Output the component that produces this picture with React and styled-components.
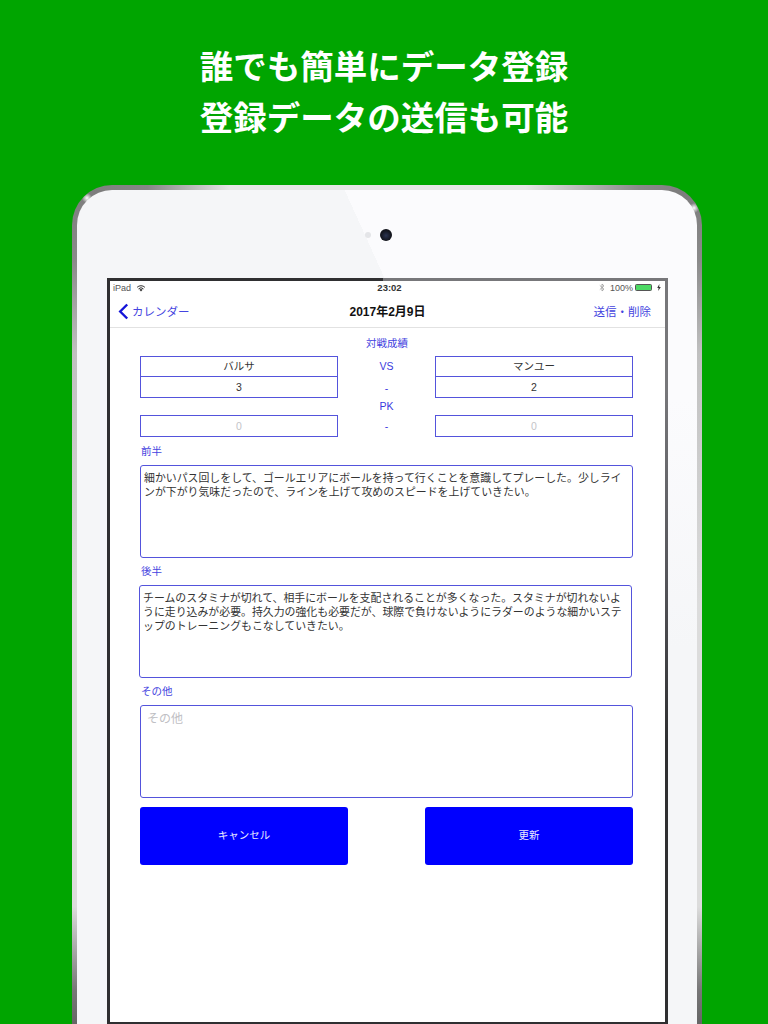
import React from "react";
import styled, { createGlobalStyle } from "styled-components";

const Global = createGlobalStyle`
  html, body { margin: 0; padding: 0; width: 768px; height: 1024px; overflow: hidden; background: #00a500; }
  body { font-family: "Liberation Sans", "Noto Sans CJK JP", sans-serif; }
`;
const Page = styled.div`
  width: 768px; height: 1024px; overflow: hidden; background: #00a500;
  display: flex; flex-direction: column; align-items: center;
`;
const Headline = styled.h1`
  margin: 0; padding-top: 41px; height: 185px; flex: none; box-sizing: border-box;
  font: 700 33.5px/51px "Noto Sans CJK JP", sans-serif; color: #fff; text-align: center;
`;
const Line = styled.div`white-space: nowrap; margin-top: -2px; margin-bottom: 2px;`;
const Chrome = styled.div`
  width: 630px; height: 839px; flex: none; box-sizing: border-box; padding: 5px 5px 0; margin-left: 6px;
  border-radius: 40px 40px 0 0;
  background:
    radial-gradient(circle 5px at 15px 13px, #ffffff, rgba(255,255,255,0)),
    radial-gradient(circle 5px at 622px 23px, #ffffff, rgba(255,255,255,0)),
    linear-gradient(90deg, #7e7e7e 0, #868686 12%, #e6e6e6 25%, #e6e6e6 72%, #8a8a8a 90%, #7a7a7a 100%) top / 100% 5px no-repeat,
    linear-gradient(180deg, #7c7c7c 0, #8a8a8a 9%, #c0c0c0 20%, #dcdcdc 50%, #dcdcdc 86%, #777 96%, #666 100%);
`;
const Bezel = styled.div`
  height: 100%; box-sizing: border-box; padding-top: 39px;
  border-radius: 35px 35px 0 0; display: flex; flex-direction: column; align-items: center;
  background:
    linear-gradient(180deg, rgba(245,246,248,0) 25%, #f5f6f8 55%),
    linear-gradient(65.6deg, #f5f6f8 64.7%, #fbfbfd 64.7%);
`;
const Sensors = styled.div`
  display: flex; align-items: center; gap: 9px; height: 12px; margin-bottom: 37px; margin-left: -17px;
`;
const Dot = styled.span`
  width: 6px; height: 6px; border-radius: 50%; background: #e4e5e8;
`;
const Lens = styled.span`
  width: 12px; height: 12px; border-radius: 50%;
  background: radial-gradient(circle at 50% 55%, #2a3350 0, #14161f 55%, #0c0c10 100%);
`;
const Screen = styled.div`
  width: 561px; flex: 1; box-sizing: border-box; border: 3px solid transparent; border-bottom-width: 2px;
  display: flex; flex-direction: column; margin-left: 1px;
  background:
    linear-gradient(#fff, #fff) padding-box,
    linear-gradient(90deg, #2f2f31 49.2%, #77777a 49.2%) top / 100% 3px no-repeat border-box,
    linear-gradient(180deg, #77777a 15%, #55555a 40%, #2f2f31 62%) right / 3px 100% no-repeat border-box,
    #2f2f31 border-box;
`;
const Status = styled.div`
  height: 16px; padding: 0 4px 3px 3px; display: grid; grid-template-columns: 1fr auto 1fr; align-items: center;
  font-size: 9px; color: #555; flex: none; box-sizing: border-box;
`;
const StatusSide = styled.div`
  display: flex; align-items: center; gap: 5px; justify-content: ${p => (p.$end ? "flex-end" : "flex-start")};
`;
const Clock = styled.div`font-weight: 700; font-size: 9.5px; color: #333; margin-left: 5px;`;
const Battery = styled.span`
  display: inline-block; width: 17px; height: 7px; border-radius: 1.5px; background: #4cd964; border: 0.5px solid #555; box-sizing: border-box;
`;
const Percent = styled.span`margin-right: -3px;`;
const Nav = styled.div`
  height: 31px; flex: none; box-sizing: border-box; border-bottom: 1px solid #e2e2e2; padding: 0 14px 2px 8px;
  display: grid; grid-template-columns: 1fr auto 1fr; align-items: center;
`;
const Back = styled.div`
  display: flex; align-items: center; gap: 3px; color: #4444e0; font-size: 11.5px;
  font-family: "Noto Sans CJK JP", sans-serif;
`;
const Title = styled.div`
  font: 700 12px "Liberation Sans", "Noto Sans CJK JP", sans-serif; color: #111; margin-left: 6px; padding-bottom: 1px;
`;
const Action = styled.div`
  text-align: right; color: #4444e0; font: 11.5px "Noto Sans CJK JP", sans-serif;
`;
const Form = styled.div`
  padding: 0 32px 0 30px; display: flex; flex-direction: column;
  font-family: "Noto Sans CJK JP", sans-serif;
`;
const Heading = styled.div`
  height: 28px; display: flex; align-items: center; justify-content: center;
  color: #4444e0; font-size: 10.5px; padding-top: 1px; box-sizing: border-box; margin-left: 1px;
`;
const Scores = styled.div`
  display: grid; grid-template-columns: 198px 97px 198px;
  grid-template-rows: 21px 21px 17px 22px; margin-bottom: 1px;
`;
const Cell = styled.div`
  border: 1px solid #5454dc; box-sizing: border-box; display: flex; align-items: center; justify-content: center;
  font-size: 10.5px; color: ${p => (p.$muted ? "#c4c4c8" : "#333")};
  margin-top: ${p => (p.$joined ? "-1px" : "0")};
  height: ${p => (p.$joined ? "22px" : "auto")};
  padding-bottom: ${p => (p.$raised ? "2px" : "0")};
  font-family: "Liberation Sans", "Noto Sans CJK JP", sans-serif;
`;
const Mid = styled.div`
  display: flex; align-items: center; justify-content: center; color: #3a3ade; font-size: 10.5px;
  padding-bottom: ${p => (p.$raised ? "2px" : "0")};
  font-family: "Liberation Sans", sans-serif;
`;
const Spacer = styled.div``;
const FieldLabel = styled.div`
  height: 27px; display: flex; align-items: center; color: #4444e0; font-size: 10.5px; box-sizing: border-box;
  padding: 0 0 2px 1px;
`;
const Area = styled.div`
  height: 93px; box-sizing: border-box; border: 1px solid #5454dc; border-radius: 3px;
  padding: 4px 3px; font-size: 10.9px; line-height: 14px; color: ${p => (p.$placeholder ? "#c0c0c4" : "#333")};
  margin-left: ${p => (p.$shifted ? "-1px" : "0")};
  margin-right: ${p => (p.$shifted ? "1px" : "0")};
  ${p => p.$placeholder && "padding: 5px 6px; font-size: 12px;"}
`;
const Gap = styled.div`height: 9px;`;
const Buttons = styled.div`display: flex; justify-content: space-between;`;
const Button = styled.div`
  width: 208px; height: 58px; box-sizing: border-box; padding-bottom: 4px; border-radius: 3px; background: #0000ff; color: #e8e8ff;
  display: flex; align-items: center; justify-content: center; font-size: 10.5px;
`;

const Wifi = () => (
  <svg width="10" height="8" viewBox="0 0 10 8" aria-hidden="true">
    <path d="M5 7.6 3.4 5.8a2.3 2.3 0 0 1 3.2 0z" fill="#333" />
    <path d="M2.5 4.9a3.6 3.6 0 0 1 5 0M1.1 3.3a5.6 5.6 0 0 1 7.8 0" stroke="#333" strokeWidth="1" fill="none" />
  </svg>
);
const Bluetooth = () => (
  <svg width="6" height="9" viewBox="0 0 6 9" aria-hidden="true">
    <path d="M.8 2.4 5 6.2 3 8V1l2 1.8L.8 6.6" stroke="#999" strokeWidth=".8" fill="none" />
  </svg>
);
const Bolt = () => (
  <svg width="4" height="7" viewBox="0 0 4 7" aria-hidden="true">
    <path d="M2.4 0 .2 4h1.4L1.2 7l2.6-4H2.2z" fill="#333" />
  </svg>
);
const Chevron = () => (
  <svg width="11" height="17" viewBox="0 0 11 17" aria-hidden="true">
    <path d="M9.2 1.5 2.2 8.5l7 7" stroke="#1414d8" strokeWidth="2.4" fill="none" />
  </svg>
);

export default function App() {
  return (
    <Page>
      <Global />
      <Headline>
        <Line>誰でも簡単にデータ登録</Line>
        <Line>登録データの送信も可能</Line>
      </Headline>
      <Chrome>
        <Bezel>
          <Sensors><Dot /><Lens /></Sensors>
          <Screen>
            <Status>
              <StatusSide>iPad <Wifi /></StatusSide>
              <Clock>23:02</Clock>
              <StatusSide $end><Bluetooth /><Percent>100%</Percent><Battery /><Bolt /></StatusSide>
            </Status>
            <Nav>
              <Back><Chevron />カレンダー</Back>
              <Title>2017年2月9日</Title>
              <Action>送信・削除</Action>
            </Nav>
            <Form>
              <Heading>対戦成績</Heading>
              <Scores>
                <Cell $raised>バルサ</Cell>
                <Mid $raised>VS</Mid>
                <Cell $raised>マンユー</Cell>
                <Cell $joined>3</Cell>
                <Mid>-</Mid>
                <Cell $joined>2</Cell>
                <Spacer />
                <Mid $raised>PK</Mid>
                <Spacer />
                <Cell $muted>0</Cell>
                <Mid>-</Mid>
                <Cell $muted>0</Cell>
              </Scores>
              <FieldLabel>前半</FieldLabel>
              <Area>細かいパス回しをして、ゴールエリアにボールを持って行くことを意識してプレーした。少しラインが下がり気味だったので、ラインを上げて攻めのスピードを上げていきたい。</Area>
              <FieldLabel>後半</FieldLabel>
              <Area $shifted>チームのスタミナが切れて、相手にボールを支配されることが多くなった。スタミナが切れないように走り込みが必要。持久力の強化も必要だが、球際で負けないようにラダーのような細かいステップのトレーニングもこなしていきたい。</Area>
              <FieldLabel>その他</FieldLabel>
              <Area $placeholder>その他</Area>
              <Gap />
              <Buttons>
                <Button>キャンセル</Button>
                <Button>更新</Button>
              </Buttons>
            </Form>
          </Screen>
        </Bezel>
      </Chrome>
    </Page>
  );
}
